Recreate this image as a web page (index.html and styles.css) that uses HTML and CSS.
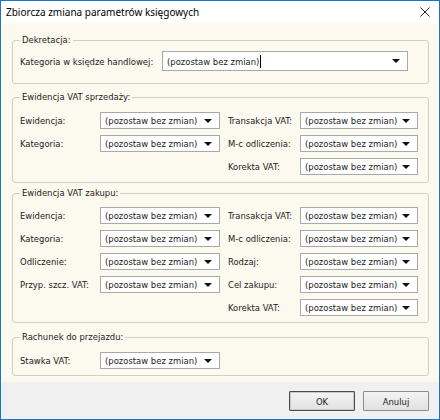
FILE: index.html
```html
<!DOCTYPE html>
<html lang="pl">
<head>
<meta charset="utf-8">
<title>Zbiorcza zmiana parametrów księgowych</title>
<link rel="stylesheet" href="styles.css">
</head>
<body>
<div class="window">
  <div class="titlebar">
    <span class="title">Zbiorcza zmiana parametrów księgowych</span>
    <svg class="close" width="10" height="10" viewBox="0 0 10 10"><path d="M0.5 0.5 L9.5 9.5 M9.5 0.5 L0.5 9.5" stroke="#222" stroke-width="1" fill="none"/></svg>
  </div>
  <div class="content">
    <fieldset class="fs fs1">
      <legend>Dekretacja:</legend>
      <div class="single">
        <span class="label">Kategoria w księdze handlowej:</span>
        <div class="combo combo-edit"><span class="val">(pozostaw bez zmian)</span><span class="cursor"></span></div>
      </div>
    </fieldset>

    <fieldset class="fs fs2">
      <legend>Ewidencja VAT sprzedaży:</legend>
      <div class="cols">
        <div class="col col-left">
          <span class="label">Ewidencja:</span><div class="combo"><span class="val">(pozostaw bez zmian)</span></div>
          <span class="label">Kategoria:</span><div class="combo"><span class="val">(pozostaw bez zmian)</span></div>
        </div>
        <div class="col col-right">
          <span class="label">Transakcja VAT:</span><div class="combo"><span class="val">(pozostaw bez zmian)</span></div>
          <span class="label">M-c odliczenia:</span><div class="combo"><span class="val">(pozostaw bez zmian)</span></div>
          <span class="label">Korekta VAT:</span><div class="combo"><span class="val">(pozostaw bez zmian)</span></div>
        </div>
      </div>
    </fieldset>

    <fieldset class="fs fs3">
      <legend>Ewidencja VAT zakupu:</legend>
      <div class="cols">
        <div class="col col-left">
          <span class="label">Ewidencja:</span><div class="combo"><span class="val">(pozostaw bez zmian)</span></div>
          <span class="label">Kategoria:</span><div class="combo"><span class="val">(pozostaw bez zmian)</span></div>
          <span class="label">Odliczenie:</span><div class="combo"><span class="val">(pozostaw bez zmian)</span></div>
          <span class="label">Przyp. szcz. VAT:</span><div class="combo"><span class="val">(pozostaw bez zmian)</span></div>
        </div>
        <div class="col col-right">
          <span class="label">Transakcja VAT:</span><div class="combo"><span class="val">(pozostaw bez zmian)</span></div>
          <span class="label">M-c odliczenia:</span><div class="combo"><span class="val">(pozostaw bez zmian)</span></div>
          <span class="label">Rodzaj:</span><div class="combo"><span class="val">(pozostaw bez zmian)</span></div>
          <span class="label">Cel zakupu:</span><div class="combo"><span class="val">(pozostaw bez zmian)</span></div>
          <span class="label">Korekta VAT:</span><div class="combo"><span class="val">(pozostaw bez zmian)</span></div>
        </div>
      </div>
    </fieldset>

    <fieldset class="fs fs4">
      <legend>Rachunek do przejazdu:</legend>
      <div class="cols">
        <div class="col col-left">
          <span class="label">Stawka VAT:</span><div class="combo"><span class="val">(pozostaw bez zmian)</span></div>
        </div>
      </div>
    </fieldset>
  </div>
  <div class="footer">
    <button class="btn btn-default">OK</button>
    <button class="btn">Anuluj</button>
  </div>
</div>
</body>
</html>
```

FILE: styles.css
```css
html, body {
  margin: 0;
  padding: 0;
  background: #ffffff;
}

.window {
  width: 440px;
  height: 420px;
  box-sizing: border-box;
  border: 1px solid #1c74c7;
  display: flex;
  flex-direction: column;
  background: #fcf9ef;
  font-family: "DejaVu Sans Condensed", "DejaVu Sans", sans-serif;
  font-size: 9.4px;
  color: #1c1c1c;
}

.titlebar {
  height: 22px;
  flex: 0 0 22px;
  background: #ffffff;
  display: flex;
  align-items: center;
  padding-left: 5px;
}

.title {
  font-family: "Noto Sans", "Open Sans", sans-serif;
  font-size: 10px;
  color: #000;
}

.close {
  margin-left: auto;
  margin-right: 9px;
  display: block;
}

.content {
  flex: 1;
  padding: 11px 10px 0 11px;
}

.fs {
  margin: 0;
  border: 1px solid #d3cfc4;
  border-radius: 3px;
  padding: 0 0 0 7px;
  min-width: 0;
}

.fs legend {
  padding: 0 2px;
  margin-left: 0;
  line-height: 12px;
  font-size: 9.4px;
}

.fs1 {
  padding-top: 5px;
  padding-bottom: 12px;
}

.fs2 {
  margin-top: 7px;
  padding-top: 9px;
  padding-bottom: 7px;
}

.fs3 {
  margin-top: 4px;
  padding-top: 8px;
  padding-bottom: 6px;
}

.fs4 {
  margin-top: 8px;
  padding-top: 9px;
  padding-bottom: 6px;
}

.single {
  display: grid;
  grid-template-columns: 142px 246px;
  align-items: center;
}

.cols {
  display: flex;
}

.col {
  display: grid;
  grid-auto-rows: 17px;
  row-gap: 6px;
  align-items: center;
  align-content: start;
}

.col-left {
  grid-template-columns: 80px 120px;
}

.col-right {
  grid-template-columns: 80px 118px;
}

.col-right .label {
  padding-left: 8px;
}

.label {
  white-space: nowrap;
}

.combo {
  box-sizing: border-box;
  height: 17px;
  border: 1px solid #a9a9a9;
  background: #ffffff;
  display: flex;
  align-items: center;
  padding-left: 4px;
  white-space: nowrap;
  overflow: hidden;
}

.combo::after {
  content: "";
  margin-left: auto;
  margin-right: 7px;
  width: 0;
  height: 0;
  border-left: 4px solid transparent;
  border-right: 4px solid transparent;
  border-top: 4px solid #111;
}

.combo-edit {
  height: 20px;
}

.cursor {
  width: 1px;
  height: 13px;
  background: #000;
  margin-left: 1px;
}

.footer {
  flex: 0 0 37px;
  box-sizing: border-box;
  background: #f0f0f0;
  display: flex;
  justify-content: flex-end;
  align-items: flex-start;
  gap: 8px;
  padding: 9px 10px 0 0;
}

.btn {
  width: 66px;
  height: 20px;
  box-sizing: border-box;
  margin: 0;
  padding: 0;
  font-family: "DejaVu Sans Condensed", "DejaVu Sans", sans-serif;
  font-size: 9.4px;
  color: #1c1c1c;
  background: linear-gradient(#f3f3f3, #e2e2e2);
  border: 1px solid #8c8c8c;
  border-radius: 1px;
}

.btn-default {
  border: 1px solid #4a4a4a;
  box-shadow: inset 0 0 0 1px #c8c8c8;
}
```
